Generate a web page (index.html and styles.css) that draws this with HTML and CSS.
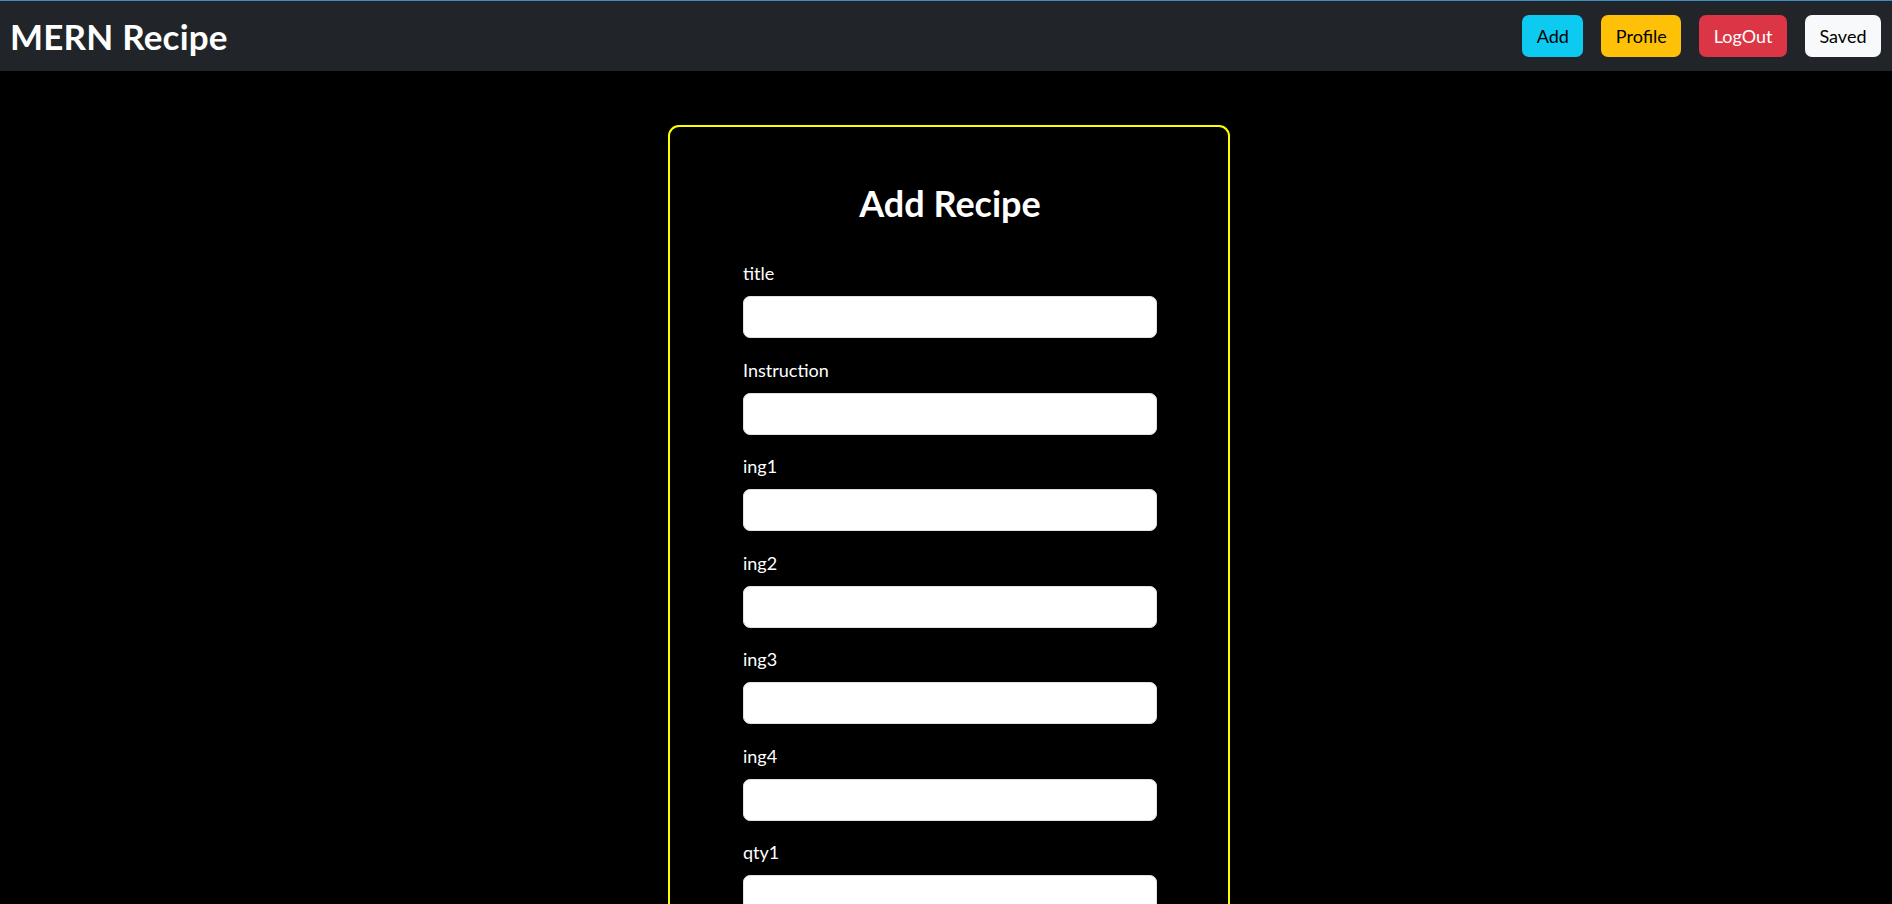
FILE: index.html
```html
<!DOCTYPE html>
<html lang="en">
<head>
<meta charset="utf-8">
<title>MERN Recipe</title>
<link rel="stylesheet" href="styles.css">
</head>
<body>
<nav class="navbar">
  <div class="brand">MERN Recipe</div>
  <div class="nav-actions">
    <button class="btn btn-info">Add</button>
    <button class="btn btn-warning">Profile</button>
    <button class="btn btn-danger">LogOut</button>
    <button class="btn btn-light">Saved</button>
  </div>
</nav>
<main class="page">
  <div class="card">
    <h2 class="card-title">Add Recipe</h2>
    <form class="form">
      <div class="field"><label class="label">title</label><input class="input" type="text"></div>
      <div class="field"><label class="label">Instruction</label><input class="input" type="text"></div>
      <div class="field"><label class="label">ing1</label><input class="input" type="text"></div>
      <div class="field"><label class="label">ing2</label><input class="input" type="text"></div>
      <div class="field"><label class="label">ing3</label><input class="input" type="text"></div>
      <div class="field"><label class="label">ing4</label><input class="input" type="text"></div>
      <div class="field"><label class="label">qty1</label><input class="input" type="text"></div>
      <div class="field"><label class="label">qty2</label><input class="input" type="text"></div>
      <div class="field"><label class="label">qty3</label><input class="input" type="text"></div>
      <div class="field"><label class="label">qty4</label><input class="input" type="text"></div>
      <div class="field"><label class="label">imgurl</label><input class="input" type="text"></div>
      <div class="submit-row"><button class="btn btn-primary" type="button">Add Recipe</button></div>
    </form>
  </div>
</main>
</body>
</html>
```

FILE: styles.css
```css
* { box-sizing: border-box; }
html, body {
  margin: 0;
  padding: 0;
  background: #000;
  color: #fff;
  font-family: "Lato", "Noto Sans", sans-serif;
  font-size: 18px;
}
.navbar {
  height: 71px;
  background: #212529;
  border-top: 1px solid #3a8fc2;
  display: flex;
  align-items: center;
  justify-content: space-between;
  padding: 0 11px 0 10px;
}
.brand {
  font-size: 35px;
  font-weight: 700;
  line-height: 44px;
  color: #fff;
  letter-spacing: 0.2px;
}
.nav-actions {
  display: flex;
  gap: 18px;
  align-items: center;
}
.btn {
  font-family: inherit;
  font-size: 18px;
  line-height: 27px;
  height: 42px;
  padding: 0 13.5px;
  border-radius: 7px;
  border: 1px solid transparent;
  cursor: pointer;
}
.btn-info { background: #0dcaf0; color: #000; }
.btn-warning { background: #ffc107; color: #000; }
.btn-danger { background: #dc3545; color: #fff; }
.btn-light { background: #f8f9fa; color: #000; }
.btn-primary { background: #0d6efd; color: #fff; }
.page {
  display: flex;
  justify-content: center;
  padding: 54px 0 40px 6px;
}
.card {
  width: 562px;
  border: 2px solid #ffff00;
  border-radius: 11px;
  padding: 55px 71px 40px 73px;
}
.card-title {
  margin: 0 0 35px;
  font-size: 36px;
  font-weight: 700;
  line-height: 43px;
  text-align: center;
}
.form { display: flex; flex-direction: column; }
.field {
  display: flex;
  flex-direction: column;
  margin-bottom: 18.5px;
}
.label {
  line-height: 27px;
  margin-bottom: 9px;
  font-size: 18px;
}
.input {
  height: 42px;
  width: 100%;
  border: 1px solid #dee2e6;
  border-radius: 7px;
  background: #fff;
  font-family: inherit;
  font-size: 18px;
  padding: 6px 13px;
}
.submit-row { display: flex; justify-content: center; }
```
